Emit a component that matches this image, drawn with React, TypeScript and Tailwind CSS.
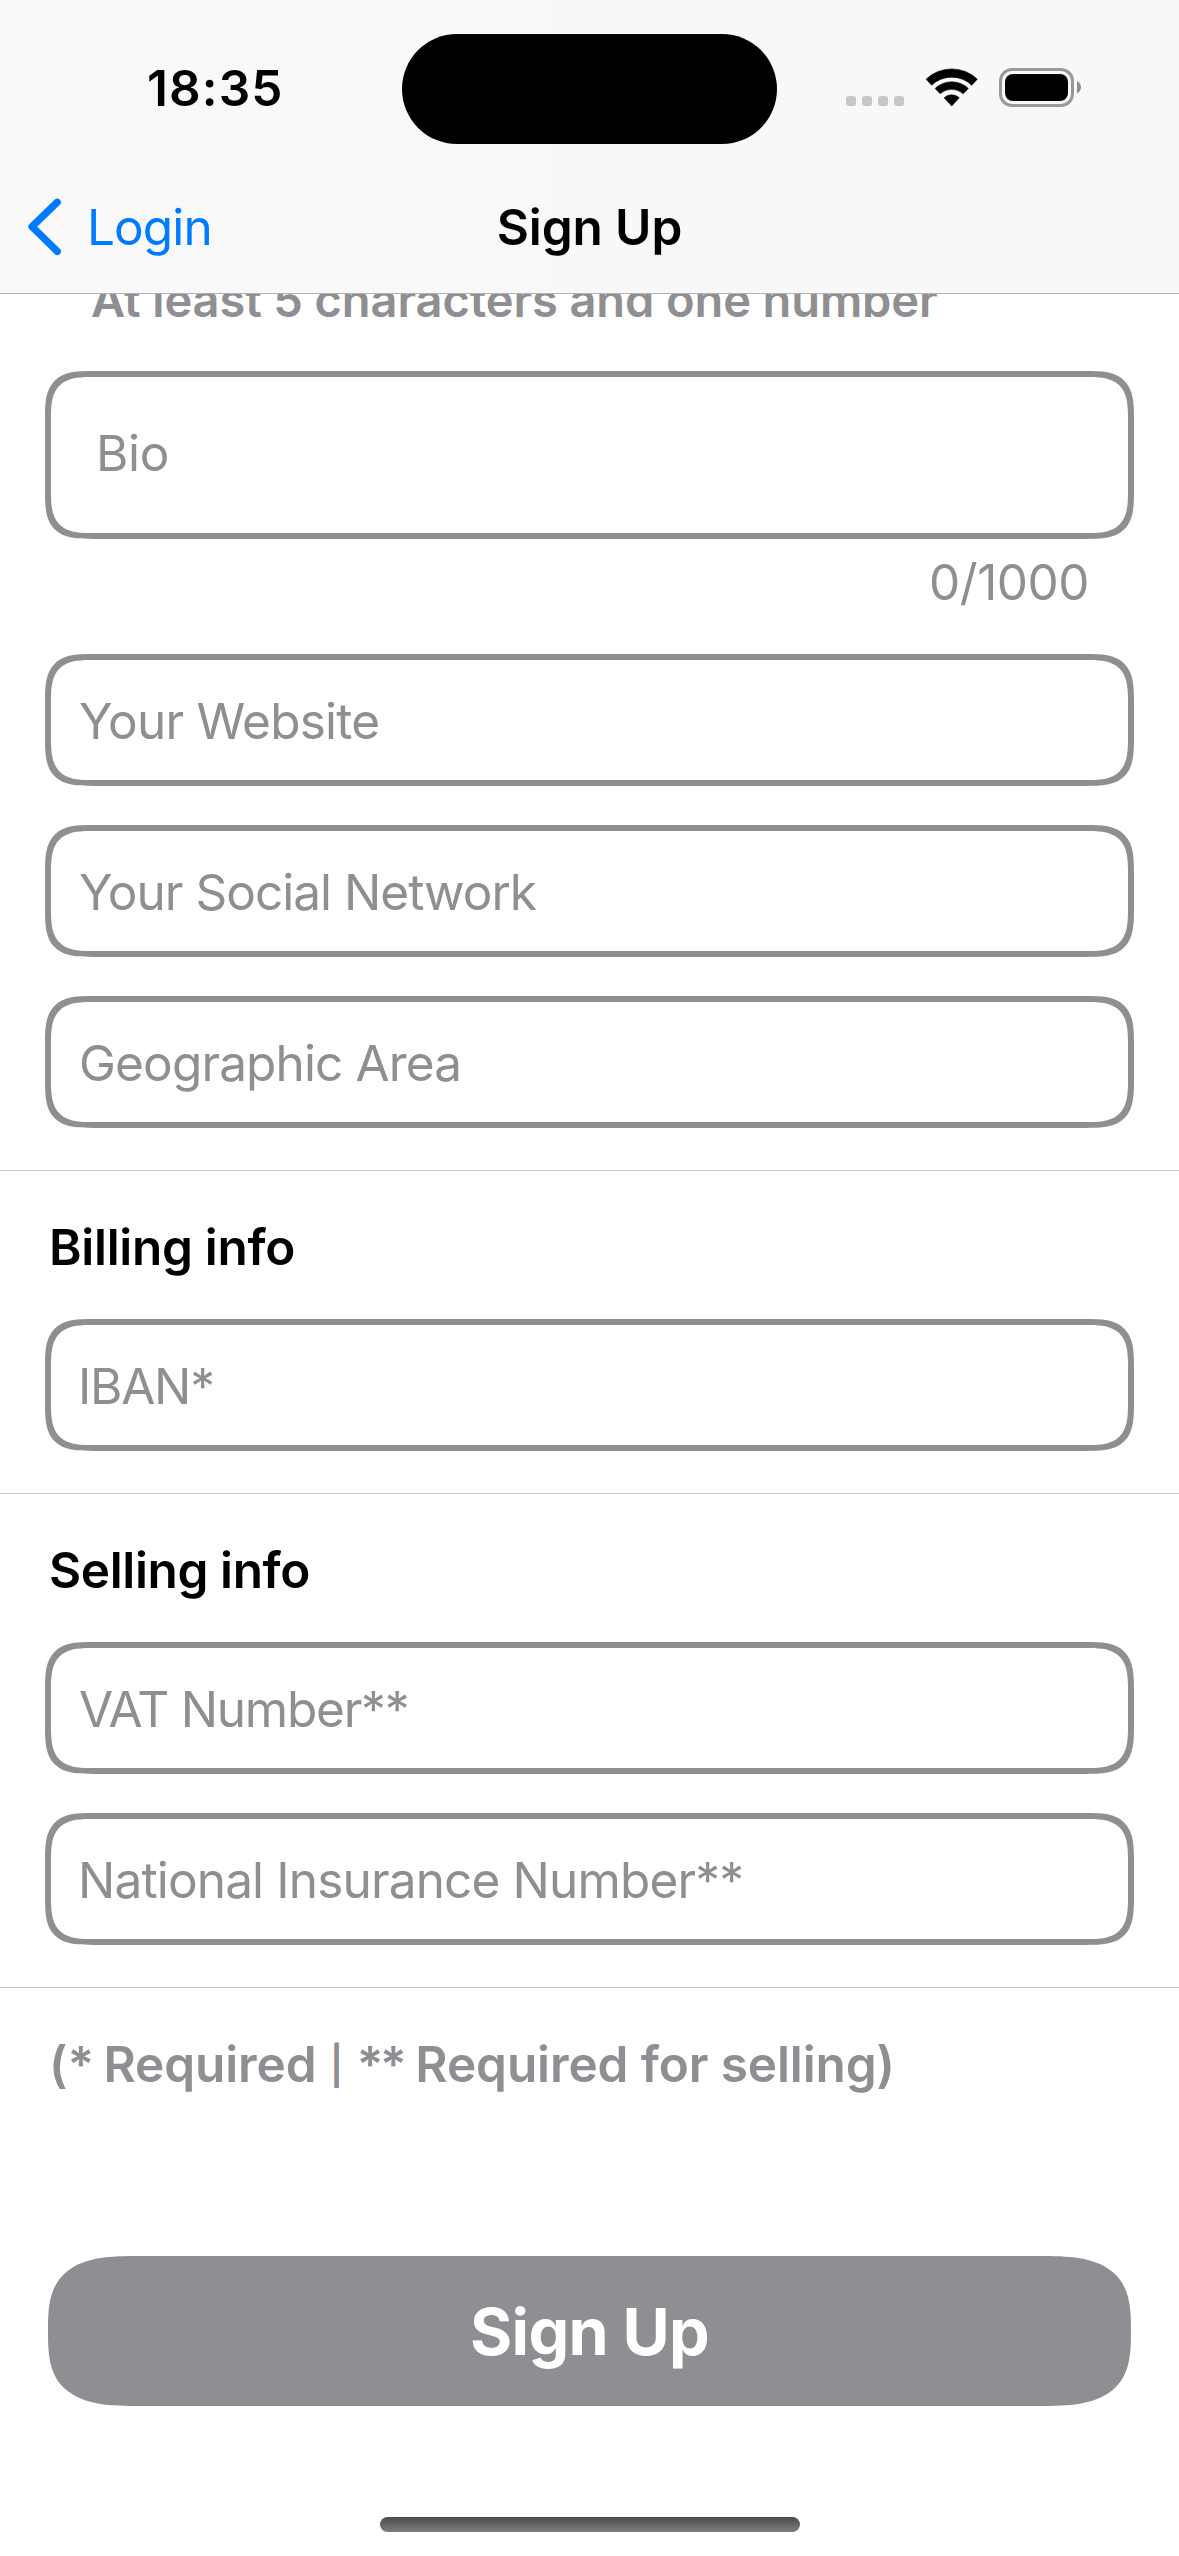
import type { ReactNode } from 'react';

function Wifi() {
  return (
    <svg className="mt-[68px] ml-[22px] h-[40px] w-[52px] shrink-0" viewBox="0 0 52 40" fill="#000">
      <g transform="translate(25.7 38)" stroke="#000" strokeWidth="0.6" strokeLinejoin="round">
        <path d="M-25.6 -26.8A37 37 0 0 1 25.6 -26.8L20 -20.8A28.9 28.9 0 0 0 -20 -20.8Z" />
        <path d="M-16.6 -17.5A24 24 0 0 1 16.6 -17.5L11.5 -12.2A16.9 16.9 0 0 0 -11.5 -12.2Z" />
        <path d="M-7.6 -8.3A11.4 11.4 0 0 1 7.6 -8.3L0 0Z" />
      </g>
    </svg>
  );
}

function Battery() {
  return (
    <svg className="mt-[68px] ml-[21px] h-[39px] w-[83px] shrink-0" viewBox="0 0 83 39">
      <rect x="1.5" y="1.5" width="72" height="36" rx="11.5" fill="none" stroke="#989999" strokeWidth="3" />
      <rect x="6" y="6" width="63" height="27" rx="8" fill="#000" />
      <path d="M78 13.2C80.6 14.4 82 16.8 82 19.3S80.6 24.2 78 25.4Z" fill="#8c8d8d" />
    </svg>
  );
}

function Box({ className, children }: { className: string; children: ReactNode }) {
  return (
    <div
      className={`mx-[45px] rounded-[33px] border-[6px] border-[#8e8e93] supports-[corner-shape:squircle]:rounded-[49px] supports-[corner-shape:squircle]:[corner-shape:superellipse(1.66)] ${className}`}
    >
      {children}
    </div>
  );
}

function Field({ label, className }: { label: string; className: string }) {
  return (
    <Box className="flex h-[132px] items-center pt-[2px]">
      <span className={className}>{label}</span>
    </Box>
  );
}

function Section({ title, titleClass, children }: { title: string; titleClass: string; children: ReactNode }) {
  return (
    <section className="border-t border-[#c6c6c8] pt-[46px]">
      <h2 className={`ml-[49px] font-semibold text-black ${titleClass}`}>{title}</h2>
      <div className="flex flex-col gap-[39px] pt-[42px] pb-[42px]">{children}</div>
    </section>
  );
}

export default function App() {
  return (
    <div className="flex h-[2556px] w-[1179px] flex-col overflow-hidden bg-white font-['Inter',sans-serif] text-[49.5px] leading-[60px] whitespace-nowrap text-[#8e8e93]">
      <header className="relative z-10 h-[294px] shrink-0 border-b border-[#b2b2b4] bg-linear-to-r from-[#f9f9f9] via-[#f7f8f8] to-[#f8f8f9] text-black">
        <div className="flex h-[161px] items-start pl-[147px]">
          <span className="mt-[58px] w-[255px] shrink-0 font-semibold tracking-[1.1px]">18:35</span>
          <div className="mt-[34px] h-[110px] w-[375px] shrink-0 rounded-[55px] bg-black" />
          <div className="mt-[96px] ml-[69px] flex gap-[6px]">
            <i className="size-[10px] rounded-[3px] bg-[#c6c7c7]" />
            <i className="size-[10px] rounded-[3px] bg-[#c6c7c7]" />
            <i className="size-[10px] rounded-[3px] bg-[#c6c7c7]" />
            <i className="size-[10px] rounded-[3px] bg-[#c6c7c7]" />
          </div>
          <Wifi />
          <Battery />
        </div>
        <nav className="grid h-[132px] grid-cols-[1fr_auto_1fr] items-center">
          <div className="flex items-center pl-[28px] text-[#007aff]">
            <svg className="h-[58px] w-[34px]" viewBox="0 0 34 58" fill="none" stroke="currentColor" strokeWidth="7.2" strokeLinecap="round" strokeLinejoin="round">
              <path d="M29.3 4.2L4 28.7L29.3 53.4" />
            </svg>
            <span className="ml-[25px] tracking-[-0.9px]">Login</span>
          </div>
          <h1 className="font-semibold tracking-[-0.11px]">Sign Up</h1>
        </nav>
      </header>

      <main className="flex flex-col">
        <p className="-mt-[22px] mb-[43px] ml-[91px] text-[47px] leading-[56px] font-semibold tracking-[-0.1px]">
          At least 5 characters and one number
        </p>
        <Box className="h-[168px] pt-[46px] pl-[45px]">
          <span className="block tracking-[-0.3px]">Bio</span>
        </Box>
        <p className="mt-[13px] pr-[90px] text-right tracking-[-0.5px]">0/1000</p>
        <div className="mt-[42px] mb-[42px] flex flex-col gap-[39px]">
          <Field label="Your Website" className="ml-[28px] tracking-[-0.75px]" />
          <Field label="Your Social Network" className="ml-[28px] tracking-[-0.98px]" />
          <Field label="Geographic Area" className="ml-[28px] tracking-[-0.86px]" />
        </div>
        <Section title="Billing info" titleClass="tracking-[-0.29px]">
          <Field label="IBAN*" className="ml-[27px] tracking-[-1.25px]" />
        </Section>
        <Section title="Selling info" titleClass="tracking-[-0.37px]">
          <Field label="VAT Number**" className="ml-[28px] tracking-[-1.22px]" />
          <Field label="National Insurance Number**" className="ml-[27px] tracking-[-0.84px]" />
        </Section>
        <p className="h-[107px] border-t border-[#c6c6c8] pt-[46px] pl-[49px] font-semibold tracking-[-0.1px]">
          (<span className="tracking-[-3px]">*</span> Required{' '}
          <span className="relative -top-[3px] px-[1px] text-[38px] leading-none">|</span>{' '}
          <span className="tracking-[-3.6px]">**</span> Required for selling)
        </p>
        <button className="mx-[48px] mt-[162px] h-[150px] rounded-[60px] bg-[#8e8e93] pt-[2px] text-[64.5px] font-bold tracking-[-0.7px] text-white supports-[corner-shape:squircle]:rounded-[92px/75px] supports-[corner-shape:squircle]:[corner-shape:superellipse(1.585)]">
          Sign Up
        </button>
        <div className="mt-[111px] h-[15px] w-[420px] self-center rounded-full bg-linear-to-b from-[#4c4c4c] to-[#7e7e7e]" />
      </main>
    </div>
  );
}
